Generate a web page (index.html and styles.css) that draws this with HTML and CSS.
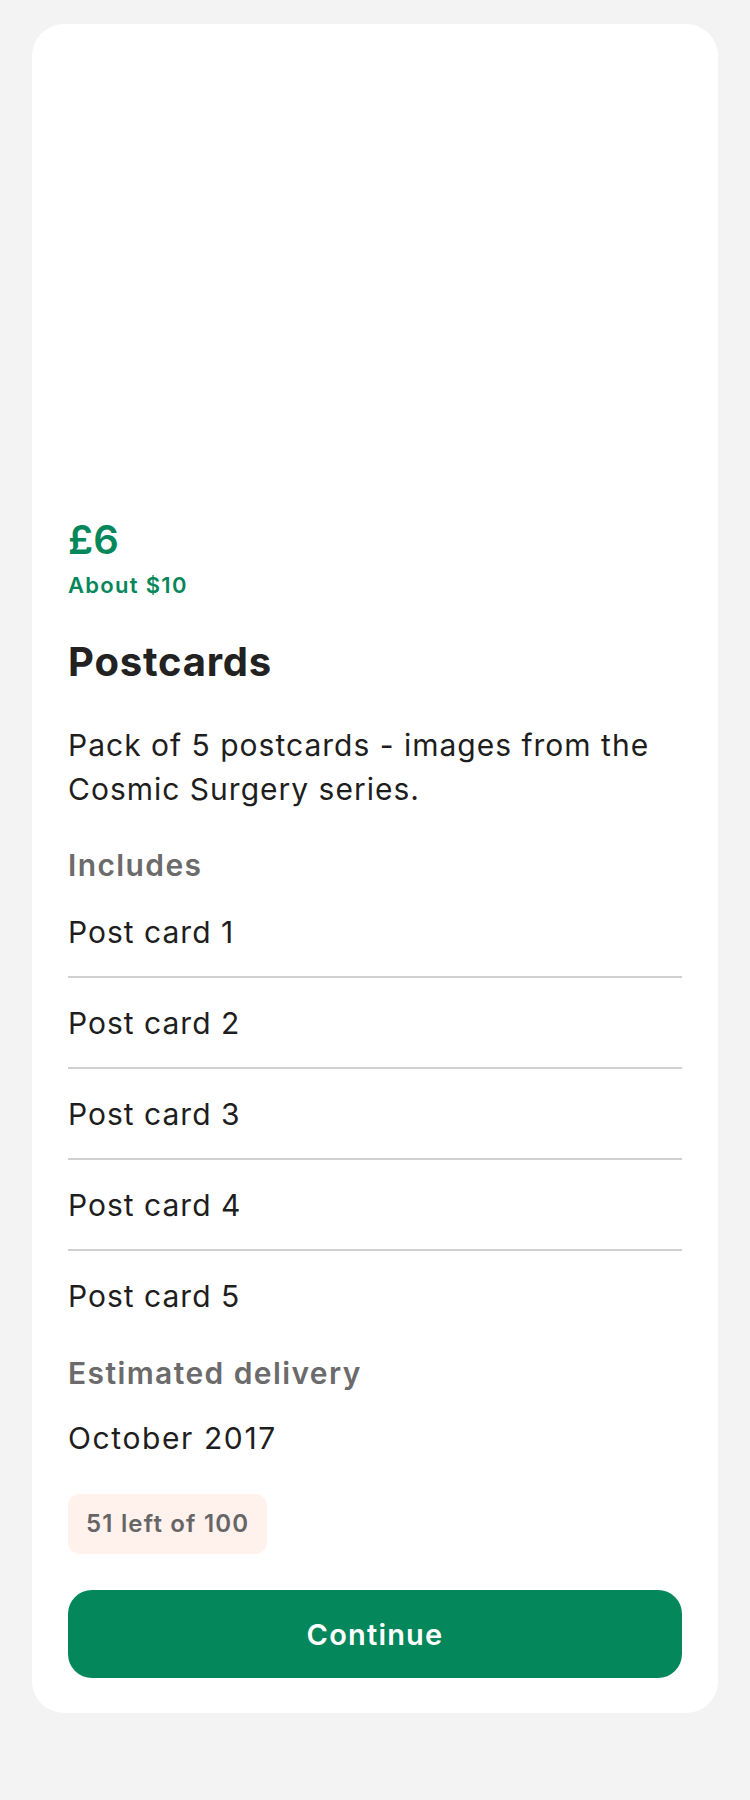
FILE: index.html
```html
<!DOCTYPE html>
<html lang="en">
<head>
<meta charset="utf-8">
<title>Postcards</title>
<link rel="stylesheet" href="styles.css">
</head>
<body>
<div class="card">
  <div class="media"></div>
  <div class="content">
    <div class="price">£6</div>
    <div class="approx">About $10</div>
    <h1 class="title">Postcards</h1>
    <p class="desc">Pack of 5 postcards - images from the Cosmic Surgery series.</p>
    <div class="label">Includes</div>
    <ul class="items">
      <li class="item">Post card 1</li>
      <li class="item">Post card 2</li>
      <li class="item">Post card 3</li>
      <li class="item">Post card 4</li>
      <li class="item">Post card 5</li>
    </ul>
    <div class="label label-delivery">Estimated delivery</div>
    <div class="delivery">October 2017</div>
    <div class="badge">51 left of 100</div>
    <button class="btn" type="button">Continue</button>
  </div>
</div>
</body>
</html>
```
FILE: styles.css
```css
html, body {
  margin: 0;
  padding: 0;
  background: #f3f3f3;
}
body {
  font-family: Inter, "Noto Sans", "Liberation Sans", sans-serif;
  color: #1e1e1e;
  padding: 24px 32px 0;
}
.card {
  background: #ffffff;
  border-radius: 32px;
  overflow: hidden;
}
.media {
  height: 492px;
}
.content {
  padding: 0 36px 35px;
  display: flex;
  flex-direction: column;
}
.price {
  font-size: 40px;
  line-height: 48px;
  font-weight: 600;
  color: #04875a;
}
.approx {
  margin-top: 7px;
  font-size: 22px;
  line-height: 28px;
  font-weight: 600;
  letter-spacing: 1.3px;
  color: #04875a;
}
.title {
  margin: 39px 0 0;
  font-size: 40px;
  line-height: 48px;
  font-weight: 700;
  letter-spacing: 0.8px;
  color: #222222;
}
.desc {
  margin: 37px 0 0;
  font-size: 30px;
  line-height: 44px;
  font-weight: 400;
  letter-spacing: 1px;
}
.label {
  margin-top: 32px;
  font-size: 30px;
  line-height: 44px;
  font-weight: 600;
  letter-spacing: 1.4px;
  color: #6b6b6b;
}
.items {
  list-style: none;
  margin: 0;
  padding: 0;
}
.item {
  padding: 23px 0 22px;
  font-size: 30px;
  line-height: 44px;
  letter-spacing: 1px;
}
.item + .item {
  border-top: 2px solid #d0d0d0;
}
.label-delivery {
  margin-top: 11px;
}
.delivery {
  margin-top: 21px;
  font-size: 30px;
  line-height: 44px;
  letter-spacing: 1.6px;
}
.badge {
  align-self: flex-start;
  margin-top: 34px;
  height: 60px;
  line-height: 60px;
  padding: 0 18px;
  border-radius: 12px;
  background: #fff1ec;
  color: #666666;
  font-size: 24px;
  font-weight: 600;
  letter-spacing: 1.2px;
}
.btn {
  margin-top: 36px;
  height: 88px;
  border: 0;
  border-radius: 24px;
  background: #04875a;
  color: #ffffff;
  font-family: inherit;
  font-size: 29px;
  font-weight: 600;
  letter-spacing: 1.2px;
  cursor: pointer;
}
```
